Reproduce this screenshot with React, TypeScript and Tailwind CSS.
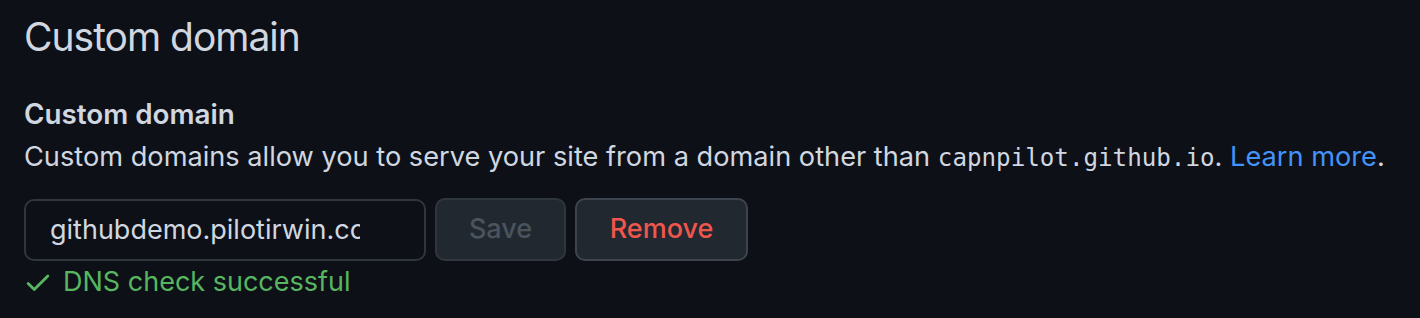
import React from "react";

export default function App() {
  return (
    <div
      className="w-[1420px] h-[318px] bg-[#0d1117] text-[#d1d7e0] overflow-hidden pl-[24px]"
      style={{ fontFamily: 'Inter, "Noto Sans", "Liberation Sans", sans-serif' }}
    >
      <h1 className="pt-[13px] text-[39px] leading-[48px] font-normal text-[#d1d7e0] tracking-[-1px]">
        Custom domain
      </h1>
      <div className="mt-[35px] text-[27.8px] leading-[36px] font-semibold">Custom domain</div>
      <p className="mt-[7px] text-[27.2px] leading-[36px] whitespace-nowrap">
        Custom domains allow you to serve your site from a domain other than{" "}
        <code
          className="text-[24.2px]"
          style={{ fontFamily: '"DejaVu Sans Mono", "Liberation Mono", monospace' }}
        >
          capnpilot.github.io
        </code>
        . <a className="text-[#4493f8]">Learn more</a>.
      </p>
      <div className="mt-[22px] flex items-center gap-[9px]">
        <input
          readOnly
          value="githubdemo.pilotirwin.com"
          className="w-[402px] h-[62px] rounded-[10px] border-2 border-[#30363d] bg-[#0d1117] pl-[24px] pr-[64px] text-[27px] text-[#d1d7e0] outline-none"
          style={{ fontFamily: 'Inter, "Noto Sans", sans-serif' }}
        />
        <button className="w-[131px] h-[63px] rounded-[10px] border-2 border-[#30363d] bg-[#212830] text-[27px] font-medium text-[#4b535d]">
          Save
        </button>
        <button className="w-[173px] h-[63px] rounded-[10px] border-2 border-[#3d444d] bg-[#212830] text-[27px] font-medium text-[#f0564c]">
          Remove
        </button>
      </div>
      <div className="mt-[3px] flex items-center text-[27px] leading-[36px] text-[#57b65f]">
        <svg width="30" height="30" viewBox="0 0 16 16" fill="currentColor" className="-ml-[1px] mr-[10px]">
          <path d="M13.78 4.22a.75.75 0 0 1 0 1.06l-7.25 7.25a.75.75 0 0 1-1.06 0L2.22 9.28a.751.751 0 0 1 .018-1.042.751.751 0 0 1 1.042-.018L6 10.94l6.72-6.72a.75.75 0 0 1 1.06 0Z" />
        </svg>
        <span>DNS check successful</span>
      </div>
    </div>
  );
}
